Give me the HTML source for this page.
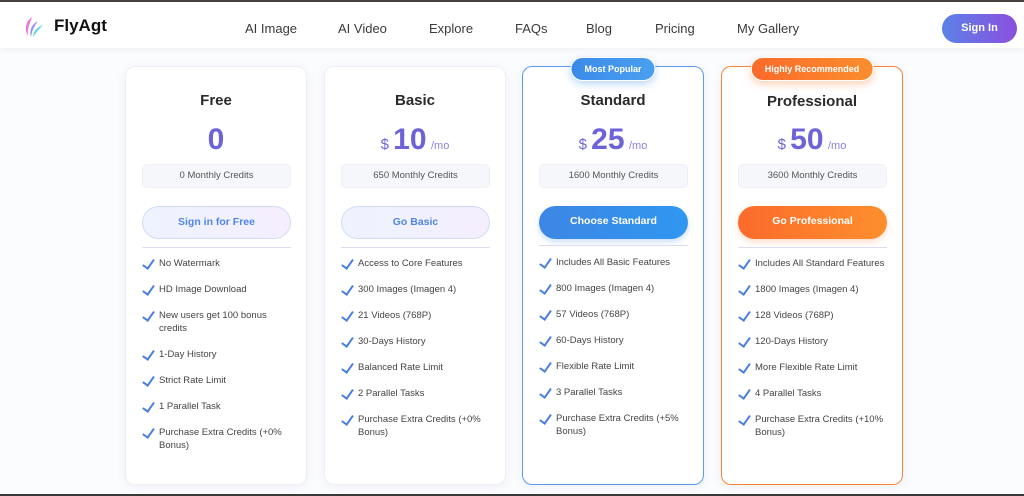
<!DOCTYPE html>
<html><head><meta charset="utf-8"><style>
*{box-sizing:border-box;margin:0;padding:0}
body{width:1024px;height:496px;overflow:hidden;background:#fbfcfe;font-family:"Liberation Sans",sans-serif;position:relative;color:#333}
.top{position:absolute;left:0;top:0;width:1024px;height:2px;background:#4a4040}
.bot{position:absolute;left:0;top:494px;width:1024px;height:2px;background:#3a3a3a}
header{position:absolute;top:2px;left:0;width:1024px;height:46px;background:#fff;box-shadow:0 2px 6px rgba(0,0,0,.05)}
.logo{position:absolute;left:54px;top:14px;font-weight:bold;font-size:17px;color:#111}
.nav a{position:absolute;top:19px;font-size:13px;color:#3a3a3a;text-decoration:none}
.signin{position:absolute;left:942px;top:12px;width:75px;height:29px;border-radius:15px;background:linear-gradient(90deg,#5b82e6,#8b4fe0);color:#fff;font-size:11px;font-weight:bold;text-align:center;line-height:29px}
.card{position:absolute;top:66px;width:182px;height:419px;background:#fff;border-radius:10px;box-shadow:0 2px 10px rgba(90,100,160,.08);border:1px solid #eef0f5}
.card h2{position:absolute;top:25px;width:100%;text-align:center;font-size:15px;color:#2a2a2a}
.price{position:absolute;top:56px;width:100%;text-align:center;color:#6c63d8;font-weight:bold}
.price b{font-size:30px}
.price s{text-decoration:none;font-size:15px;font-weight:normal}
.price i{font-style:normal;font-size:11px;font-weight:normal;color:#8a82e0}
.cred{position:absolute;left:16px;top:97px;width:149px;height:24px;background:#f6f7fb;border:1px solid #eef0f6;border-radius:5px;font-size:9.5px;text-align:center;line-height:22px;color:#555}
.btn{position:absolute;left:16px;top:139px;width:149px;height:33px;border-radius:17px;text-align:center;line-height:31px;font-size:10.5px;font-weight:bold}
.lite{background:linear-gradient(90deg,#eef3fe,#f4eefe);border:1px solid #cfdbf8;color:#4f86e8}
.div{position:absolute;left:16px;top:180px;width:149px;height:1px;background:#dcdcf2}
ul{position:absolute;left:16px;top:190px;list-style:none;width:155px}
li{position:relative;padding-left:17px;font-size:9.5px;line-height:13px;color:#444;margin-bottom:13px}
li:before{content:"";position:absolute;left:3px;top:0px;width:5px;height:10px;border:solid #4a7fe0;border-width:0 2px 2px 0;transform:rotate(35deg)}
.badge{position:absolute;top:-10px;left:50%;transform:translateX(-50%);height:24px;border-radius:12px;color:#fff;font-size:9px;font-weight:bold;line-height:22px;padding:0 13px;border:1.5px solid #fff;white-space:nowrap}
</style></head><body>
<div class="top"></div>
<header>
<svg style="position:absolute;left:24px;top:13px" width="20" height="24" viewBox="0 0 20 24"><path d="M8 2 C2 6 0 14 4 21 C3 14 6 8 8 2Z" fill="#f075d8"/><path d="M14 6 C8 9 5 15 7 22 C8 15 11 10 14 6Z" fill="#9a8ef0"/><path d="M19 10 C13 12 9 17 9 22 C12 18 15 14 19 10Z" fill="#5fd8d8"/></svg>
<div class="logo">FlyAgt</div>
<div class="nav"><a style="left:245px">AI Image</a><a style="left:338px">AI Video</a><a style="left:429px">Explore</a><a style="left:515px">FAQs</a><a style="left:586px">Blog</a><a style="left:655px">Pricing</a><a style="left:737px">My Gallery</a></div>
<div class="signin">Sign In</div>
</header>

<div class="card" style="left:125px">
<h2>Free</h2><div class="price"><b>0</b></div>
<div class="cred">0 Monthly Credits</div>
<div class="btn lite">Sign in for Free</div><div class="div"></div>
<ul><li>No Watermark</li><li>HD Image Download</li><li>New users get 100 bonus credits</li><li>1-Day History</li><li>Strict Rate Limit</li><li>1 Parallel Task</li><li>Purchase Extra Credits (+0% Bonus)</li></ul>
</div>

<div class="card" style="left:324px">
<h2>Basic</h2><div class="price"><s>$ </s><b>10</b> <i>/mo</i></div>
<div class="cred">650 Monthly Credits</div>
<div class="btn lite">Go Basic</div><div class="div"></div>
<ul><li>Access to Core Features</li><li>300 Images (Imagen 4)</li><li>21 Videos (768P)</li><li>30-Days History</li><li>Balanced Rate Limit</li><li>2 Parallel Tasks</li><li>Purchase Extra Credits (+0% Bonus)</li></ul>
</div>

<div class="card" style="left:522px;border:1.5px solid #5b9bef">
<div class="badge" style="background:linear-gradient(90deg,#3b8ae8,#4aa0f0);box-shadow:0 3px 8px rgba(60,140,230,.35)">Most Popular</div>
<h2>Standard</h2><div class="price"><s>$ </s><b>25</b> <i>/mo</i></div>
<div class="cred">1600 Monthly Credits</div>
<div class="btn" style="background:linear-gradient(90deg,#3d86e4,#2f97f0);color:#fff;box-shadow:0 3px 6px rgba(50,130,230,.25)">Choose Standard</div><div class="div" style="top:178px"></div>
<ul style="top:189px"><li>Includes All Basic Features</li><li>800 Images (Imagen 4)</li><li>57 Videos (768P)</li><li>60-Days History</li><li>Flexible Rate Limit</li><li>3 Parallel Tasks</li><li>Purchase Extra Credits (+5% Bonus)</li></ul>
</div>

<div class="card" style="left:721px;border:1.5px solid #f8843a">
<div class="badge" style="background:linear-gradient(90deg,#fb6a2a,#fb8e2e);box-shadow:0 3px 8px rgba(250,120,40,.35)">Highly Recommended</div>
<h2 style="top:26px">Professional</h2><div class="price"><s>$ </s><b>50</b> <i>/mo</i></div>
<div class="cred">3600 Monthly Credits</div>
<div class="btn" style="background:linear-gradient(90deg,#fc6a2c,#fd8f2c);color:#fff;box-shadow:0 3px 6px rgba(250,120,40,.25)">Go Professional</div><div class="div"></div>
<ul><li>Includes All Standard Features</li><li>1800 Images (Imagen 4)</li><li>128 Videos (768P)</li><li>120-Days History</li><li>More Flexible Rate Limit</li><li>4 Parallel Tasks</li><li>Purchase Extra Credits (+10% Bonus)</li></ul>
</div>
<div class="bot"></div>
</body></html>
